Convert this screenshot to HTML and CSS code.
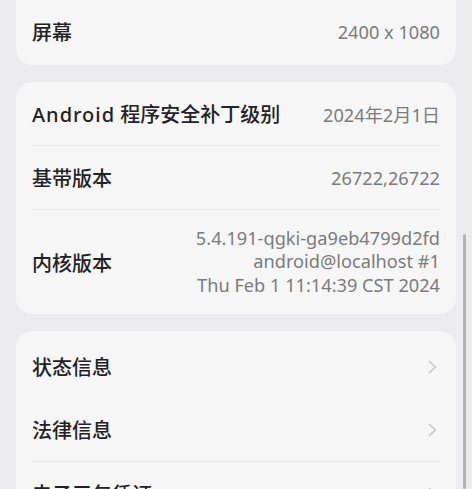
FILE: index.html
```html
<!DOCTYPE html>
<html lang="zh-CN">
<head>
<meta charset="utf-8">
<link rel="stylesheet" href="styles.css">
</head>
<body>
<div class="page">
  <section class="card card-first">
    <div class="row">
      <span class="label">屏幕</span>
      <span class="value">2400 x 1080</span>
    </div>
  </section>

  <section class="card">
    <div class="row">
      <span class="label"><span class="latin">Android</span> 程序安全补丁级别</span>
      <span class="value">2024年2月1日</span>
    </div>
    <div class="divider"></div>
    <div class="row">
      <span class="label">基带版本</span>
      <span class="value">26722,26722</span>
    </div>
    <div class="divider"></div>
    <div class="row row-tall">
      <span class="label">内核版本</span>
      <span class="value value-multi">5.4.191-qgki-ga9eb4799d2fd<br>android@localhost #1<br>Thu Feb 1 11:14:39 CST 2024</span>
    </div>
  </section>

  <section class="card card-last">
    <div class="row">
      <span class="label">状态信息</span>
      <svg class="chev" width="9" height="14" viewBox="0 0 9 14"><path d="M1.5 1.5 L7.5 7 L1.5 12.5" fill="none" stroke="#c6c6c8" stroke-width="1.5" stroke-linecap="round" stroke-linejoin="round"/></svg>
    </div>
    <div class="row">
      <span class="label">法律信息</span>
      <svg class="chev" width="9" height="14" viewBox="0 0 9 14"><path d="M1.5 1.5 L7.5 7 L1.5 12.5" fill="none" stroke="#c6c6c8" stroke-width="1.5" stroke-linecap="round" stroke-linejoin="round"/></svg>
    </div>
    <div class="divider"></div>
    <div class="row">
      <span class="label">电子三包凭证</span>
      <svg class="chev" width="9" height="14" viewBox="0 0 9 14"><path d="M1.5 1.5 L7.5 7 L1.5 12.5" fill="none" stroke="#c6c6c8" stroke-width="1.5" stroke-linecap="round" stroke-linejoin="round"/></svg>
    </div>
  </section>
</div>
<div class="scrollbar"></div>
</body>
</html>
```

FILE: styles.css
```css
html, body {
  margin: 0;
  padding: 0;
  background: #ececee;
  height: 100%;
  overflow: hidden;
}

body {
  font-family: "Noto Sans", "Noto Sans CJK SC", sans-serif;
  color: #1c1c1e;
  position: relative;
}

.page {
  display: flex;
  flex-direction: column;
  gap: 17px;
  padding: 0 16px;
}

.card {
  background: #f6f6f7;
  border-radius: 16px;
  padding: 0 16px;
}

.card-first {
  margin-top: -20px;
  padding-top: 20px;
  padding-bottom: 2px;
  border-top-left-radius: 0;
  border-top-right-radius: 0;
}

.card-last {
  padding-top: 4px;
}

.row {
  display: flex;
  align-items: center;
  justify-content: space-between;
  height: 63px;
}

.row-tall {
  height: 104px;
}

.label {
  font-size: 20px;
  font-weight: 500;
  color: #222224;
  font-family: "Noto Sans", "Noto Sans CJK SC", sans-serif;
}

.latin {
  letter-spacing: 1px;
}

.value {
  font-family: "Noto Sans", "Noto Sans CJK SC", sans-serif;
  font-size: 18.2px;
  color: #7b7b7d;
  text-align: right;
}

.value-multi {
  line-height: 23.5px;
}

.divider {
  height: 1px;
  background: #e7e7e9;
}

.chev {
  display: block;
  margin-right: 3px;
}

.scrollbar {
  position: absolute;
  right: 6px;
  top: 234px;
  bottom: 0;
  width: 3px;
  background: #b4b4b6;
  border-radius: 2px;
}
```
